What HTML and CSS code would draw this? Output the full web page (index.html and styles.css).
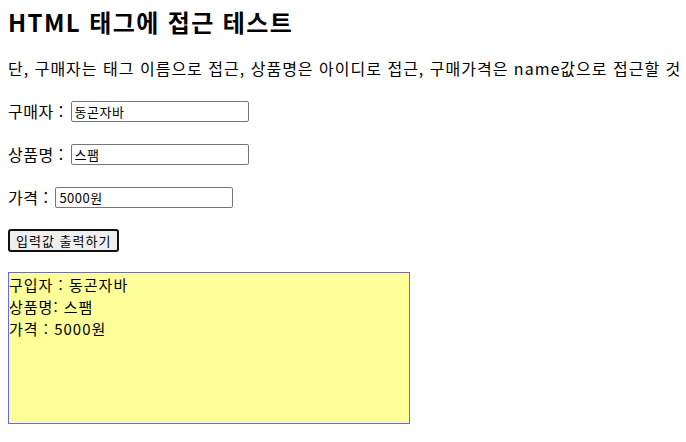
FILE: index.html
```html
<!DOCTYPE html>
<html lang="ko">
<head>
  <meta charset="UTF-8">
  <title>HTML 태그에 접근 테스트</title>
  <link rel="stylesheet" href="styles.css">
</head>
<body>

  <h2 class="page-title">HTML 태그에 접근 테스트</h2>
  <p class="intro">단, 구매자는 태그 이름으로 접근, 상품명은 아이디로 접근, 구매가격은 name값으로 접근할 것</p>

  <div class="form-row">
    <label for="buyer">구매자 :</label>
    <input type="text" id="buyer" class="field" value="동곤자바">
  </div>
  <div class="form-row">
    <label for="product">상품명 :</label>
    <input type="text" id="product" class="field" value="스팸">
  </div>
  <div class="form-row">
    <label for="price">가격 :</label>
    <input type="text" id="price" name="price" class="field" value="5000원">
  </div>
  <div class="form-row">
    <button type="button" class="print-btn">입력값 출력하기</button>
  </div>

  <!-- 출력 영역 -->
  <div class="result">
    <div class="result-line">구입자 : 동곤자바</div>
    <div class="result-line">상품명: 스팸</div>
    <div class="result-line">가격 : 5000원</div>
  </div>

</body>
</html>
```

FILE: styles.css
```css
body {
  margin: 0;
  padding: 8px;
  font-family: "Noto Sans CJK KR", "Noto Sans", sans-serif;
  font-size: 16px;
  color: #000;
}
.page-title {
  margin: 0;
  font-size: 24px;
  line-height: 28px;
  font-weight: bold;
  letter-spacing: 1.4px;
}
.intro {
  margin: 21px 0 0;
  font-size: 16px;
  line-height: 22px;
  letter-spacing: 1px;
  white-space: nowrap;
}
.form-row {
  display: flex;
  align-items: center;
  height: 22px;
  margin-top: 21px;
  font-size: 16px;
  letter-spacing: 0.5px;
}
.form-row label {
  margin-right: 7px;
}
.field {
  box-sizing: border-box;
  width: 178px;
  height: 21px;
  padding: 0 3px;
  border: 1px solid #767676;
  border-radius: 2px;
  font-family: "Noto Sans CJK KR", sans-serif;
  font-size: 13px;
  letter-spacing: 0.5px;
  line-height: 19px;
}
.print-btn {
  box-sizing: border-box;
  height: 23px;
  padding: 0 6px;
  background-color: #efefef;
  border: 2px solid #101010;
  border-radius: 3px;
  font-family: "Noto Sans CJK KR", sans-serif;
  font-size: 13px;
  letter-spacing: 1px;
}
.result {
  box-sizing: border-box;
  width: 402px;
  height: 152px;
  margin-top: 21px;
  padding-top: 1px;
  border: 1px solid #6666ff;
  background-color: #ffff99;
  font-size: 15px;
  letter-spacing: 1px;
}
.result-line {
  line-height: 22px;
}
```
